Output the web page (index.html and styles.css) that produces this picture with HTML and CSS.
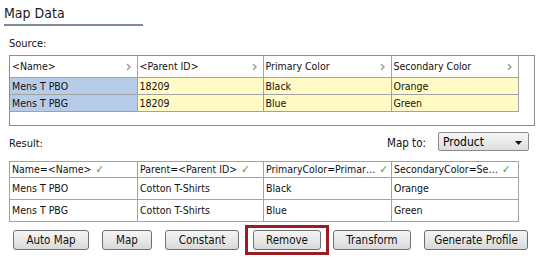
FILE: index.html
```html
<!DOCTYPE html>
<html>

<head>
    <title>Map Data</title>
    <link rel="stylesheet" href="styles.css">
</head>

<body>
    <div class="panel">
        <div class="title">Map Data</div>
        <div class="label">Source:</div>

        <div class="source">
            <table class="grid src-grid">
                <colgroup>
                    <col class="c1"><col class="c2"><col class="c3"><col class="c4">
                </colgroup>
                <tr class="head">
                    <th><span>&lt;Name&gt;</span><svg class="chev" width="5" height="8" viewBox="0 0 5 8"><path d="M1 1 L4 4 L1 7" fill="none" stroke="#9a9a9a" stroke-width="1.4"/></svg></th>
                    <th><span>&lt;Parent ID&gt;</span><svg class="chev" width="5" height="8" viewBox="0 0 5 8"><path d="M1 1 L4 4 L1 7" fill="none" stroke="#9a9a9a" stroke-width="1.4"/></svg></th>
                    <th><span>Primary Color</span><svg class="chev" width="5" height="8" viewBox="0 0 5 8"><path d="M1 1 L4 4 L1 7" fill="none" stroke="#9a9a9a" stroke-width="1.4"/></svg></th>
                    <th><span>Secondary Color</span><svg class="chev" width="5" height="8" viewBox="0 0 5 8"><path d="M1 1 L4 4 L1 7" fill="none" stroke="#9a9a9a" stroke-width="1.4"/></svg></th>
                </tr>
                <tr class="row">
                    <td class="key">Mens T PBO</td>
                    <td>18209</td>
                    <td>Black</td>
                    <td>Orange</td>
                </tr>
                <tr class="row">
                    <td class="key">Mens T PBG</td>
                    <td>18209</td>
                    <td>Blue</td>
                    <td>Green</td>
                </tr>
            </table>
        </div>

        <div class="result-bar">
            <span class="label">Result:</span>
            <div class="map-to">
                <span>Map to:</span>
                <div class="select">
                    <span>Product</span>
                    <svg width="7" height="4" viewBox="0 0 7 4"><path d="M0 0 H7 L3.5 4 Z" fill="#111"/></svg>
                </div>
            </div>
        </div>

        <table class="grid res-grid">
            <colgroup>
                <col class="r1"><col class="c2"><col class="c3"><col class="c4">
            </colgroup>
            <tr class="head">
                <th><div class="hcell"><span class="txt">Name=&lt;Name&gt;</span><span class="check">&#10003;</span></div></th>
                <th><div class="hcell"><span class="txt">Parent=&lt;Parent ID&gt;</span><span class="check">&#10003;</span></div></th>
                <th><div class="hcell"><span class="txt">PrimaryColor=Primar&hellip;</span><span class="check">&#10003;</span></div></th>
                <th><div class="hcell"><span class="txt">SecondaryColor=Se&hellip;</span><span class="check">&#10003;</span></div></th>
            </tr>
            <tr class="row">
                <td>Mens T PBO</td>
                <td>Cotton T-Shirts</td>
                <td>Black</td>
                <td>Orange</td>
            </tr>
            <tr class="row">
                <td>Mens T PBG</td>
                <td>Cotton T-Shirts</td>
                <td>Blue</td>
                <td>Green</td>
            </tr>
        </table>

        <div class="buttons">
            <button class="btn w-auto">Auto Map</button>
            <button class="btn w-map">Map</button>
            <button class="btn w-const">Constant</button>
            <span class="highlight"><button class="btn w-remove">Remove</button></span>
            <button class="btn w-trans">Transform</button>
            <button class="btn w-gen">Generate Profile</button>
        </div>
    </div>
</body>

</html>
```

FILE: styles.css
```css
body {
    margin: 0;
    background-color: #fff;
    font-family: "DejaVu Sans Condensed", "DejaVu Sans", sans-serif;
    font-stretch: condensed;
    font-size: 11px;
    color: #111;
}

.panel {
    width: 539px;
    height: 260px;
    overflow: hidden;
}

.title {
    margin-left: 4px;
    width: 139px;
    height: 21px;
    padding-top: 3px;
    font-size: 14px;
    line-height: 20px;
    color: #1a1a1a;
    border-bottom: 2px solid #7d8a99;
}

.label {
    margin-left: 9px;
    line-height: 14px;
}

.panel > .label {
    margin-top: 11px;
    height: 18px;
}

.source {
    margin-left: 9px;
    width: 524px;
    height: 69px;
    border: 1px solid #8e8e8e;
}

.grid {
    border-collapse: collapse;
    table-layout: fixed;
    font-size: 10.5px;
}

.grid th,
.grid td {
    padding: 0 0 0 2px;
    text-align: left;
    font-weight: normal;
    white-space: nowrap;
    overflow: hidden;
    border: 1px solid #a2a2a2;
}

.src-grid {
    width: 508px;
}

.src-grid .c1 {
    width: 127px;
}

.c2 {
    width: 126px;
}

.c3 {
    width: 128px;
}

.c4 {
    width: 127px;
}

.src-grid th,
.src-grid td {
    border-top: none;
    border-left: none;
}

.src-grid .head th {
    height: 21px;
    background-color: #fff;
}

.src-grid .head th span {
    float: left;
    line-height: 21px;
}

.chev {
    float: right;
    margin: 7px 6px 0 0;
}

.src-grid .row td {
    height: 16px;
    line-height: 16px;
    background-color: #fffac6;
}

.src-grid .row td.key {
    background-color: #b7cce8;
}

.result-bar {
    display: flex;
    justify-content: space-between;
    align-items: center;
    margin-top: 6px;
    height: 19px;
}

.result-bar .label {
    margin-top: 4px;
}

.map-to {
    display: flex;
    align-items: center;
    gap: 12px;
    margin-right: 10px;
}

.map-to > span {
    font-size: 11.5px;
    margin-top: 2px;
}

.select {
    display: flex;
    justify-content: space-between;
    align-items: center;
    box-sizing: border-box;
    width: 91px;
    height: 19px;
    padding: 0 6px 0 4px;
    border: 1px solid #8a8a8a;
    border-radius: 2px;
    background: linear-gradient(#f6f6f6, #dedede);
    font-size: 12px;
    color: #000;
}

.select svg {
    margin-top: 2px;
}

.res-grid {
    margin: 10px 0 0 9px;
    width: 510px;
}

.res-grid .r1 {
    width: 128px;
}

.res-grid .head th {
    height: 15px;
    line-height: 15px;
    padding-right: 2px;
    overflow: visible;
}

.hcell {
    display: flex;
    align-items: center;
}

.hcell .txt {
    flex-shrink: 0;
    white-space: nowrap;
}

.check {
    flex-shrink: 0;
    margin-left: 4px;
    color: #3f9a2e;
    font-size: 11px;
    font-family: "DejaVu Sans", sans-serif;
    line-height: 14px;
}

.res-grid .row td {
    height: 21px;
    line-height: 21px;
}

.buttons {
    display: flex;
    align-items: center;
    margin: 8px 0 0 13px;
    gap: 13px;
}

.btn {
    box-sizing: border-box;
    height: 20px;
    padding: 0;
    border: 1px solid #707070;
    border-radius: 3px;
    background: linear-gradient(#f4f4f4 0%, #e8e8e8 50%, #d8d8d8 100%);
    font-family: inherit;
    font-stretch: condensed;
    font-size: 11.5px;
    color: #111;
}

.w-auto {
    width: 76px;
}

.w-map {
    width: 50px;
}

.w-const {
    width: 74px;
}

.w-remove {
    width: 68px;
}

.w-trans {
    width: 78px;
}

.w-gen {
    width: 104px;
}

.highlight {
    position: relative;
    display: flex;
    margin-left: 1px;
    margin-right: -1px;
}

.highlight::after {
    content: "";
    position: absolute;
    top: -5px;
    bottom: -5px;
    left: -8px;
    right: -8px;
    border: 3px solid #9c1c24;
}
```
